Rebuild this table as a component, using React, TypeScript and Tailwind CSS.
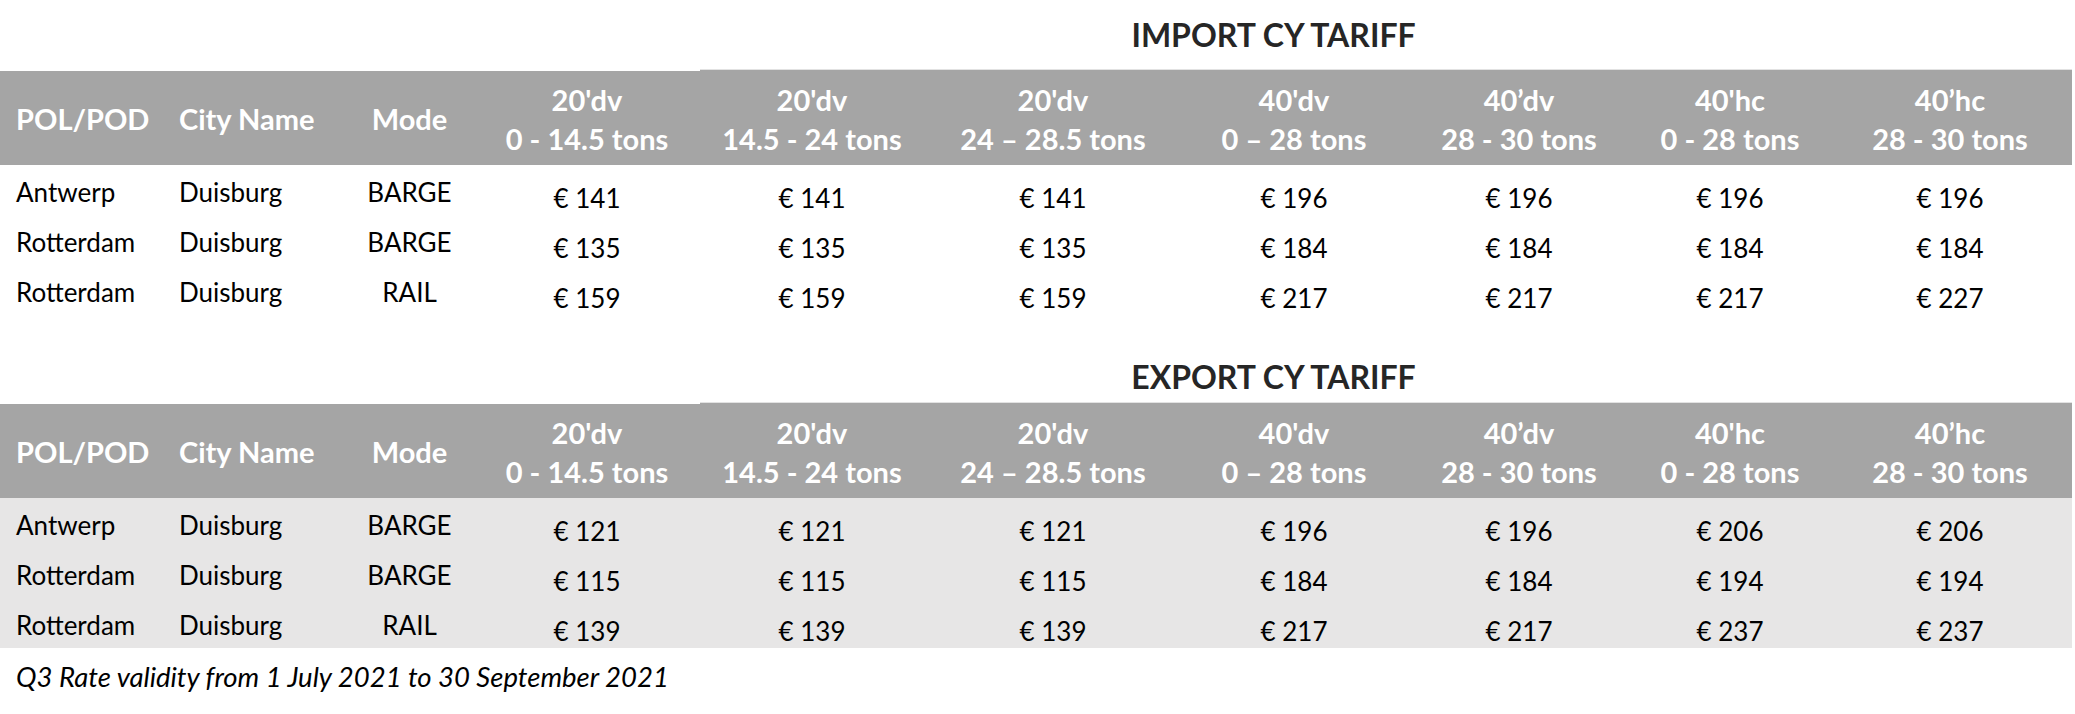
import React from 'react';

type Row = {
  pol: string;
  city: string;
  mode: string;
  prices: string[];
};

const headers: [string, string][] = [
  ["20'dv", '0 - 14.5 tons'],
  ["20'dv", '14.5 - 24 tons'],
  ["20'dv", '24 – 28.5 tons'],
  ["40'dv", '0 – 28 tons'],
  ['40’dv', '28 - 30 tons'],
  ["40'hc", '0 - 28 tons'],
  ['40’hc', '28 - 30 tons'],
];

const importRows: Row[] = [
  { pol: 'Antwerp', city: 'Duisburg', mode: 'BARGE', prices: ['141', '141', '141', '196', '196', '196', '196'] },
  { pol: 'Rotterdam', city: 'Duisburg', mode: 'BARGE', prices: ['135', '135', '135', '184', '184', '184', '184'] },
  { pol: 'Rotterdam', city: 'Duisburg', mode: 'RAIL', prices: ['159', '159', '159', '217', '217', '217', '227'] },
];

const exportRows: Row[] = [
  { pol: 'Antwerp', city: 'Duisburg', mode: 'BARGE', prices: ['121', '121', '121', '196', '196', '206', '206'] },
  { pol: 'Rotterdam', city: 'Duisburg', mode: 'BARGE', prices: ['115', '115', '115', '184', '184', '194', '194'] },
  { pol: 'Rotterdam', city: 'Duisburg', mode: 'RAIL', prices: ['139', '139', '139', '217', '217', '237', '237'] },
];

const cols = 'grid grid-cols-[165px_180px_129px_226px_224px_258px_224px_226px_196px_244px]';

function HeaderRow() {
  return (
    <div className={`${cols} h-[96px] text-white font-bold text-[29px] leading-[39px]`}>
      <div className="flex items-center pl-4 bg-[#a5a5a5] border-t-2 border-white">POL/POD</div>
      <div className="flex items-center pl-[14px] bg-[#a5a5a5] border-t-2 border-white">City Name</div>
      <div className="flex items-center justify-center bg-[#a5a5a5] border-t-2 border-white">Mode</div>
      {headers.map(([a, b], i) => (
        <div
          key={i}
          className={`flex flex-col items-center justify-center bg-[#a5a5a5] ${
            i === 0 ? 'border-t-2 border-white pt-[1px]' : 'border-t border-[#e2e2e2] pt-[2px]'
          }`}
        >
          <span>{a}</span>
          <span>{b}</span>
        </div>
      ))}
    </div>
  );
}

function DataRows({ rows, shaded }: { rows: Row[]; shaded?: boolean }) {
  return (
    <div className={`${shaded ? 'bg-[#e7e6e6]' : 'bg-white'} w-[2072px] text-[26px] text-black`}>
      {rows.map((r, i) => (
        <div key={i} className={`${cols} h-[50px]`}>
          <div className="flex items-center pl-4 pt-[2px]">{r.pol}</div>
          <div className="flex items-center pl-[14px] pt-[2px]">{r.city}</div>
          <div className="flex items-center justify-center pt-[2px]">{r.mode}</div>
          {r.prices.map((p, j) => (
            <div key={j} className="flex items-center justify-center pt-[14px]">
              € {p}
            </div>
          ))}
        </div>
      ))}
    </div>
  );
}

function Title({ children, top }: { children: React.ReactNode; top: string }) {
  return (
    <div className={`${top} pl-[472px] text-center`}>
      <h2 className="font-bold text-[32px] leading-[50px] text-[#262626]">{children}</h2>
    </div>
  );
}

export default function App() {
  return (
    <div className="w-[2075px] h-[714px] bg-white overflow-hidden" style={{ fontFamily: 'Lato, "Open Sans", sans-serif' }}>
      <Title top="pt-[10px] h-[69px]">IMPORT CY TARIFF</Title>
      <HeaderRow />
      <DataRows rows={importRows} />
      <Title top="pt-[37px] h-[87px]">EXPORT CY TARIFF</Title>
      <HeaderRow />
      <DataRows rows={exportRows} shaded />
      <p className="pt-[9px] pl-4 italic text-[27.5px] leading-[40px] text-black">
        Q3 Rate validity from 1 July 2021 to 30 September 2021
      </p>
    </div>
  );
}
